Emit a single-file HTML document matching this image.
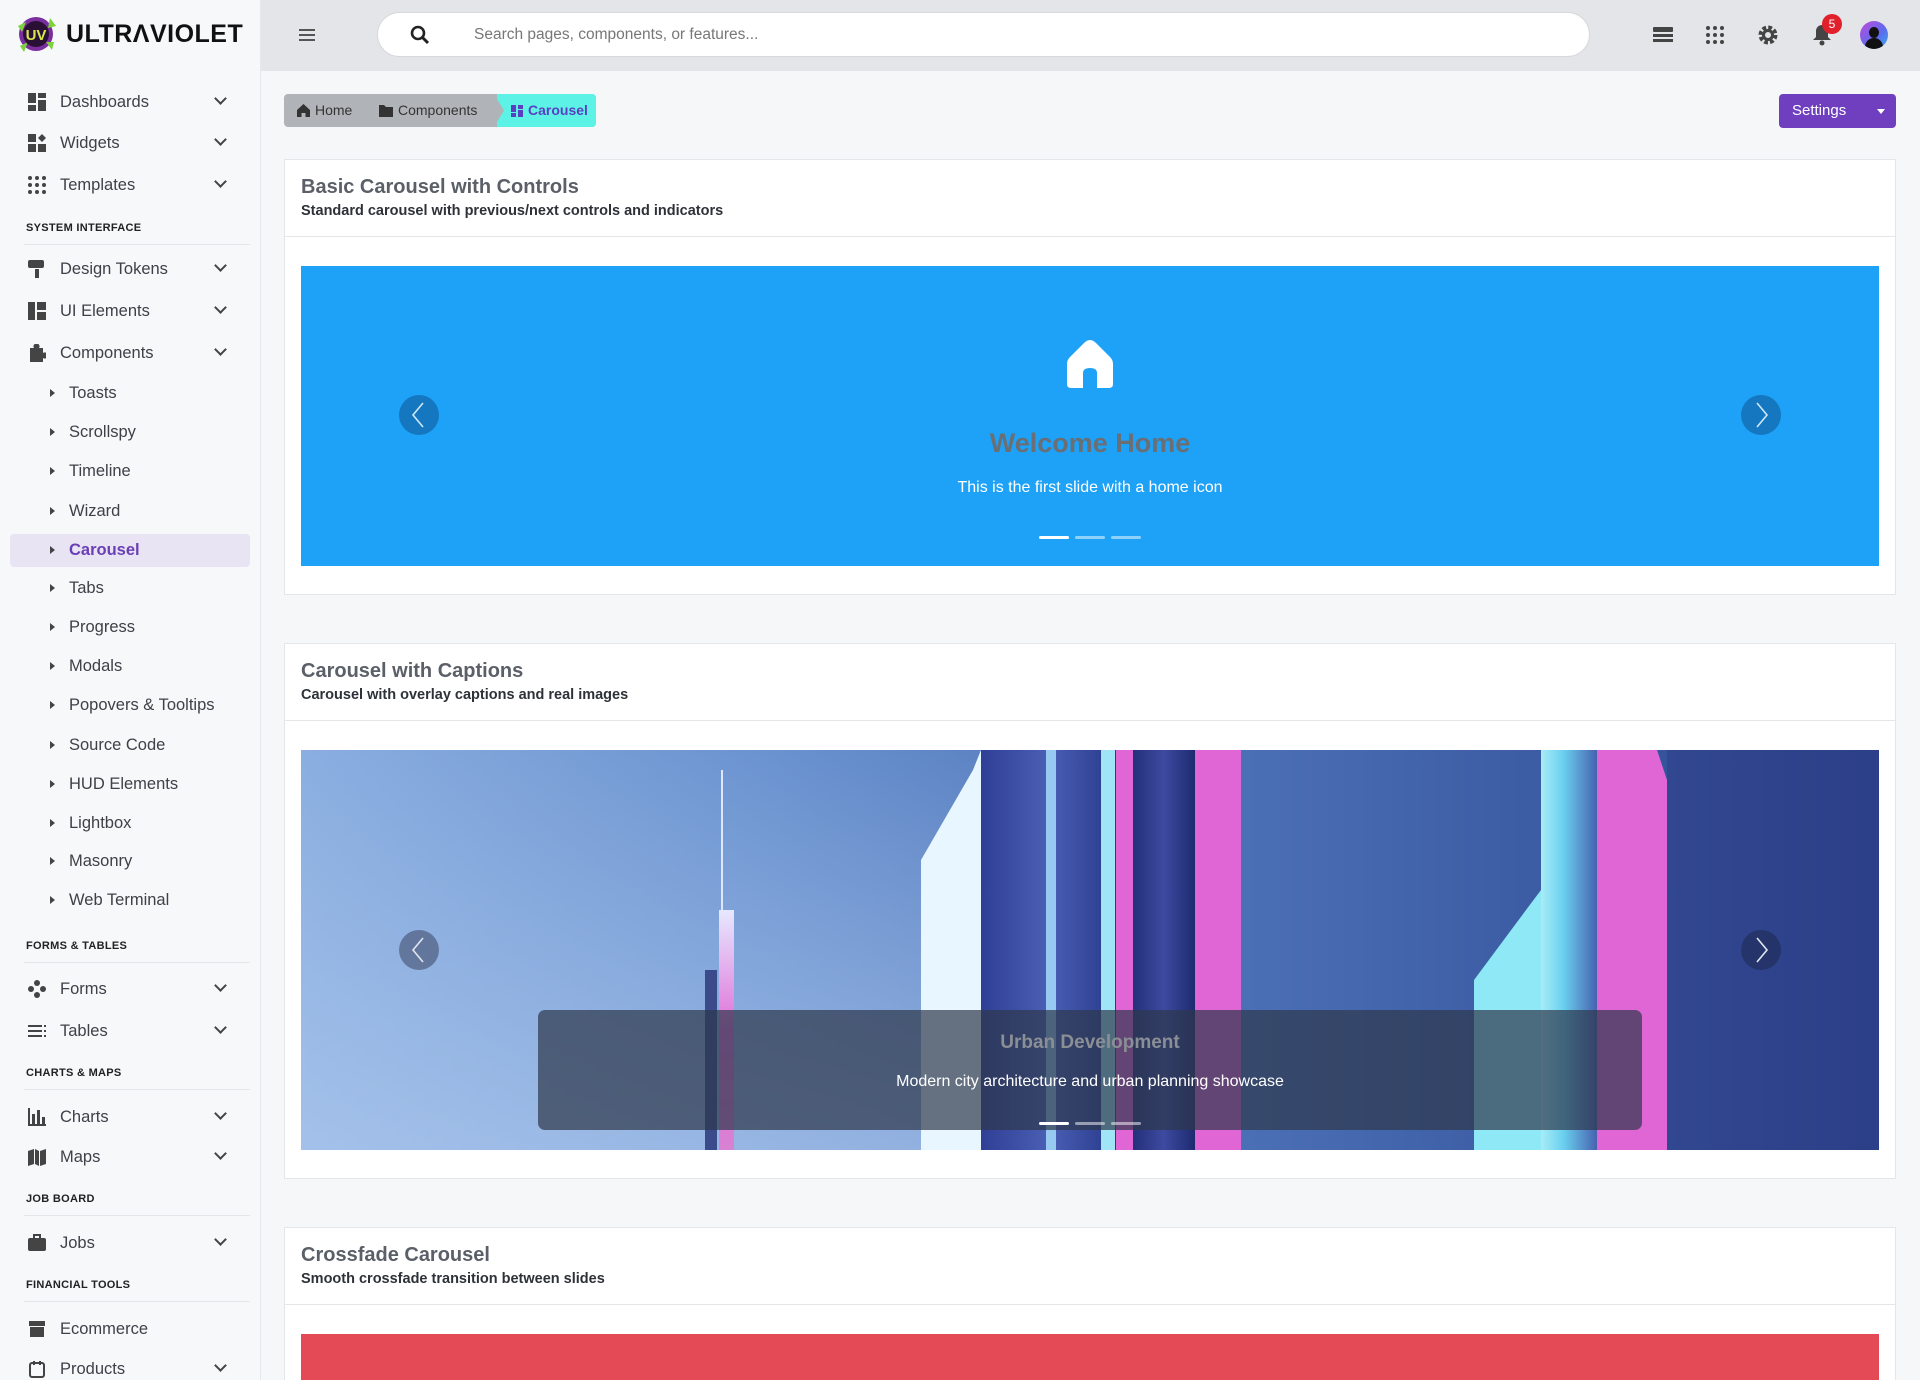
<!DOCTYPE html>
<html style="width:1920px;height:1380px;overflow:hidden"><head><meta charset="utf-8"><style>
*{box-sizing:border-box;margin:0;padding:0}
body{width:1920px;height:1380px;overflow:hidden;background:#f6f7f9;font-family:"Liberation Sans",sans-serif;color:#3d4148;position:relative}
.sb{position:absolute;left:0;top:0;width:261px;height:1380px;background:#f7f8fa;border-right:1px solid #e6e8eb}
.logo{position:absolute;left:14px;top:12px;display:flex;align-items:center}
.logo b{font-size:25px;font-weight:900;color:#111;letter-spacing:0.5px;margin-left:8px}
.it{position:absolute;left:0;width:261px;height:30px;display:flex;align-items:center;font-size:16.5px;color:#3d4148}
.it .ic{position:absolute;left:28px;width:18px;height:18px}
.it .lb{position:absolute;left:60px}
.it .ch{position:absolute;left:216px;width:9px;height:9px;border-right:2px solid #444;border-bottom:2px solid #444;transform:rotate(45deg);top:7px}
.sub .lb{left:69px}
.sub .ar{position:absolute;left:50px;width:0;height:0;border-left:5px solid #444;border-top:4px solid transparent;border-bottom:4px solid transparent}
.sec{position:absolute;left:26px;font-size:11px;font-weight:bold;color:#222;letter-spacing:0.3px}
.sec:after{content:"";position:absolute;left:-2px;top:22px;width:226px;height:1px;background:#e4e6ea}
.top{position:absolute;left:261px;top:0;width:1659px;height:71px;background:#e3e5e8}
.search{position:absolute;left:377px;top:12px;width:1213px;height:45px;background:#fff;border-radius:23px;border:1px solid #d6d8dc}
.search span{position:absolute;left:96px;top:13px;font-size:15.5px;color:#777}
.card{position:absolute;left:284px;width:1612px;background:#fff;border:1px solid #e4e6ea;overflow:hidden}
.card .hd{height:77px;border-bottom:1px solid #e4e6ea;padding:16px 16px}
.card h2{font-size:20px;color:#5b6068;font-weight:bold}
.card p.s{font-size:14.5px;font-weight:bold;color:#2e3238;margin-top:4px}
.arrow{position:absolute;width:40px;height:40px;border-radius:50%}
.ind{position:absolute;height:3px;width:30px;border-radius:2px}
</style></head><body>
<div class="sb">
 <div class="logo">
  <svg width="44" height="44" viewBox="0 0 44 44"><circle cx="22" cy="22" r="17" fill="#7b2f9e"/><path d="M4 14 L12 10 L8 20Z M36 6 L34 16 L42 14Z M40 30 L32 30 L38 38Z M6 34 L14 30 L10 40Z" fill="#7cd23a"/><circle cx="22" cy="22" r="13" fill="#2a1035"/><text x="22" y="28" font-size="15" font-weight="900" fill="#d7e84a" text-anchor="middle" font-family="Liberation Sans">UV</text></svg>
  <b>ULTRΛVIOLET</b>
 </div>
 <div class="it" style="top:87px"><svg class="ic" viewBox="0 0 18 18" fill="#444"><rect x="0" y="0" width="8" height="10"/><rect x="10" y="0" width="8" height="5"/><rect x="0" y="12" width="8" height="6"/><rect x="10" y="7" width="8" height="11"/></svg><span class="lb">Dashboards</span><span class="ch"></span></div>
 <div class="it" style="top:128px"><svg class="ic" viewBox="0 0 18 18" fill="#444"><rect x="0" y="0" width="8" height="8"/><path d="M14 0 L18 4 L14 8 L10 4Z"/><rect x="0" y="10" width="8" height="8"/><rect x="10" y="10" width="8" height="8"/></svg><span class="lb">Widgets</span><span class="ch"></span></div>
 <div class="it" style="top:170px"><svg class="ic" viewBox="0 0 18 18" fill="#444"><circle cx="2" cy="2" r="2"/><circle cx="9" cy="2" r="2"/><circle cx="16" cy="2" r="2"/><circle cx="2" cy="9" r="2"/><circle cx="9" cy="9" r="2"/><circle cx="16" cy="9" r="2"/><circle cx="2" cy="16" r="2"/><circle cx="9" cy="16" r="2"/><circle cx="16" cy="16" r="2"/></svg><span class="lb">Templates</span><span class="ch"></span></div>
 <div class="sec" style="top:222px">SYSTEM INTERFACE</div>
 <div class="it" style="top:254px"><svg class="ic" viewBox="0 0 18 18" fill="#444"><rect x="0" y="0" width="16" height="8" rx="2"/><rect x="7" y="9" width="4" height="9"/></svg><span class="lb">Design Tokens</span><span class="ch"></span></div>
 <div class="it" style="top:296px"><svg class="ic" viewBox="0 0 18 18" fill="#444"><rect x="0" y="0" width="7" height="18"/><rect x="9" y="0" width="9" height="8"/><rect x="9" y="10" width="9" height="8"/></svg><span class="lb">UI Elements</span><span class="ch"></span></div>
 <div class="it" style="top:338px"><svg class="ic" viewBox="0 0 18 18" fill="#444"><path d="M2 4h4a3 3 0 1 1 5 0h4v5a3 3 0 1 1 0 5v4H2z"/></svg><span class="lb">Components</span><span class="ch"></span></div>
 <div class="it sub" style="top:378px"><span class="ar"></span><span class="lb">Toasts</span></div>
 <div class="it sub" style="top:417px"><span class="ar"></span><span class="lb">Scrollspy</span></div>
 <div class="it sub" style="top:456px"><span class="ar"></span><span class="lb">Timeline</span></div>
 <div class="it sub" style="top:496px"><span class="ar"></span><span class="lb">Wizard</span></div>
 <div style="position:absolute;left:10px;top:534px;width:240px;height:33px;background:#e9e4f4;border-radius:4px"></div>
 <div class="it sub" style="top:535px;color:#6a3fb5;font-weight:bold"><span class="ar"></span><span class="lb">Carousel</span></div>
 <div class="it sub" style="top:573px"><span class="ar"></span><span class="lb">Tabs</span></div>
 <div class="it sub" style="top:612px"><span class="ar"></span><span class="lb">Progress</span></div>
 <div class="it sub" style="top:651px"><span class="ar"></span><span class="lb">Modals</span></div>
 <div class="it sub" style="top:690px"><span class="ar"></span><span class="lb">Popovers &amp; Tooltips</span></div>
 <div class="it sub" style="top:730px"><span class="ar"></span><span class="lb">Source Code</span></div>
 <div class="it sub" style="top:769px"><span class="ar"></span><span class="lb">HUD Elements</span></div>
 <div class="it sub" style="top:808px"><span class="ar"></span><span class="lb">Lightbox</span></div>
 <div class="it sub" style="top:846px"><span class="ar"></span><span class="lb">Masonry</span></div>
 <div class="it sub" style="top:885px"><span class="ar"></span><span class="lb">Web Terminal</span></div>
 <div class="sec" style="top:940px">FORMS &amp; TABLES</div>
 <div class="it" style="top:974px"><svg class="ic" viewBox="0 0 18 18" fill="#444"><circle cx="9" cy="3" r="3"/><circle cx="3" cy="9" r="3"/><circle cx="15" cy="9" r="3"/><circle cx="9" cy="15" r="3"/></svg><span class="lb">Forms</span><span class="ch"></span></div>
 <div class="it" style="top:1016px"><svg class="ic" viewBox="0 0 18 18" fill="#444"><rect x="0" y="3" width="14" height="2"/><rect x="0" y="8" width="14" height="2"/><rect x="0" y="13" width="14" height="2"/><rect x="16" y="3" width="2" height="2"/><rect x="16" y="8" width="2" height="2"/><rect x="16" y="13" width="2" height="2"/></svg><span class="lb">Tables</span><span class="ch"></span></div>
 <div class="sec" style="top:1067px">CHARTS &amp; MAPS</div>
 <div class="it" style="top:1102px"><svg class="ic" viewBox="0 0 18 18" fill="#444"><rect x="0" y="0" width="2" height="18"/><rect x="0" y="16" width="18" height="2"/><rect x="4" y="6" width="3" height="10"/><rect x="9" y="2" width="3" height="14"/><rect x="14" y="9" width="3" height="7"/></svg><span class="lb">Charts</span><span class="ch"></span></div>
 <div class="it" style="top:1142px"><svg class="ic" viewBox="0 0 18 18" fill="#444"><path d="M0 3 L6 1 V16 L0 18Z M7 1 L11 3 V18 L7 16Z M12 3 L18 1 V16 L12 18Z"/></svg><span class="lb">Maps</span><span class="ch"></span></div>
 <div class="sec" style="top:1193px">JOB BOARD</div>
 <div class="it" style="top:1228px"><svg class="ic" viewBox="0 0 18 18" fill="#444"><rect x="0" y="4" width="18" height="13" rx="2"/><rect x="6" y="1" width="6" height="4" fill="none" stroke="#444" stroke-width="2"/></svg><span class="lb">Jobs</span><span class="ch"></span></div>
 <div class="sec" style="top:1279px">FINANCIAL TOOLS</div>
 <div class="it" style="top:1314px"><svg class="ic" viewBox="0 0 18 18" fill="#444"><rect x="1" y="1" width="16" height="5"/><rect x="2" y="7" width="14" height="10"/></svg><span class="lb">Ecommerce</span></div>
 <div class="it" style="top:1354px"><svg class="ic" viewBox="0 0 18 18" fill="none" stroke="#444" stroke-width="2"><rect x="2" y="3" width="14" height="14" rx="2"/><path d="M6 1v4M12 1v4"/></svg><span class="lb">Products</span><span class="ch"></span></div>
</div>

<div class="top">
 <svg style="position:absolute;left:38px;top:28px" width="16" height="14" viewBox="0 0 16 14" fill="#555"><rect y="1" width="16" height="2"/><rect y="6" width="16" height="2"/><rect y="11" width="16" height="2"/></svg>
 <div class="search" style="left:116px"><svg style="position:absolute;left:32px;top:12px" width="20" height="20" viewBox="0 0 20 20"><circle cx="8" cy="8" r="6" fill="none" stroke="#222" stroke-width="2.6"/><path d="M12.5 12.5L18 18" stroke="#222" stroke-width="3"/></svg><span>Search pages, components, or features...</span></div>
 <svg style="position:absolute;left:1392px;top:27px" width="20" height="16" viewBox="0 0 20 16" fill="#444"><rect y="0" width="20" height="5" rx="1"/><rect y="7" width="20" height="3"/><rect y="12" width="20" height="3"/></svg>
 <svg style="position:absolute;left:1445px;top:26px" width="18" height="18" viewBox="0 0 18 18" fill="#444"><circle cx="2" cy="2" r="2"/><circle cx="9" cy="2" r="2"/><circle cx="16" cy="2" r="2"/><circle cx="2" cy="9" r="2"/><circle cx="9" cy="9" r="2"/><circle cx="16" cy="9" r="2"/><circle cx="2" cy="16" r="2"/><circle cx="9" cy="16" r="2"/><circle cx="16" cy="16" r="2"/></svg>
 <svg style="position:absolute;left:1496px;top:24px" width="22" height="22" viewBox="0 0 22 22"><circle cx="11" cy="11" r="7" fill="none" stroke="#444" stroke-width="5" stroke-dasharray="3.5 2"/><circle cx="11" cy="11" r="6" fill="#444"/><circle cx="11" cy="11" r="3" fill="#e3e5e8"/></svg>
 <svg style="position:absolute;left:1551px;top:24px" width="20" height="22" viewBox="0 0 20 22" fill="#444"><path d="M10 1a6 6 0 0 1 6 6v6l3 3H1l3-3V7a6 6 0 0 1 6-6z"/><circle cx="10" cy="19" r="2.5"/></svg>
 <div style="position:absolute;left:1561px;top:14px;width:20px;height:20px;border-radius:50%;background:#e0202a;color:#fff;font-size:12px;text-align:center;line-height:20px">5</div>
 <div style="position:absolute;left:1599px;top:21px;width:28px;height:28px;border-radius:50%;background:linear-gradient(135deg,#c04ad8,#5a6cf0 60%,#3ab0e8);overflow:hidden"><div style="position:absolute;left:9px;top:6px;width:10px;height:11px;border-radius:50%;background:#111"></div><div style="position:absolute;left:5px;top:17px;width:18px;height:14px;border-radius:9px 9px 0 0;background:#111"></div></div>
</div>

<div style="position:absolute;left:284px;top:94px;width:312px;height:33px;border-radius:4px;overflow:hidden;background:#b0b4b9;font-size:14px">
 <div style="position:absolute;left:213px;top:0;width:99px;height:33px;background:#5cf2e6"></div>
 <svg style="position:absolute;left:210px;top:0" width="10" height="33"><path d="M0 0 L10 16.5 L0 33Z" fill="#b0b4b9"/></svg>
 <svg style="position:absolute;left:13px;top:10px" width="13" height="13" viewBox="0 0 13 13" fill="#333"><path d="M6.5 0 L13 6 V13 H8.5 V9 H4.5 V13 H0 V6Z"/></svg>
 <span style="position:absolute;left:31px;top:8px;color:#333">Home</span>
 <svg style="position:absolute;left:95px;top:11px" width="14" height="12" viewBox="0 0 14 12" fill="#333"><path d="M0 0h5l2 2h7v10H0z"/></svg>
 <span style="position:absolute;left:114px;top:8px;color:#333">Components</span>
 <svg style="position:absolute;left:227px;top:11px" width="12" height="12" viewBox="0 0 12 12" fill="#5b3fc2"><rect width="5" height="7"/><rect x="7" width="5" height="4"/><rect y="8" width="5" height="4"/><rect x="7" y="5" width="5" height="7"/></svg>
 <span style="position:absolute;left:244px;top:8px;color:#5b3fc2;font-weight:bold">Carousel</span>
</div>
<div style="position:absolute;left:1779px;top:94px;width:117px;height:34px;border-radius:4px;background:#6f3fc0;color:#fff;font-size:15px">
 <span style="position:absolute;left:13px;top:8px">Settings</span>
 <span style="position:absolute;left:98px;top:15px;border-top:5px solid #fff;border-left:4px solid transparent;border-right:4px solid transparent"></span>
</div>

<div class="card" style="top:159px;height:436px">
 <div class="hd"><h2>Basic Carousel with Controls</h2><p class="s">Standard carousel with previous/next controls and indicators</p></div>
 <div style="position:absolute;left:16px;top:106px;width:1578px;height:300px;background:#1da2f7">
  <svg style="position:absolute;left:766px;top:74px" width="46" height="48" viewBox="0 0 46 48" fill="#fff"><path d="M23 0 Q26 0 29 3 L43 17 Q46 20 46 24 V44 Q46 48 42 48 H30 V33 Q30 28 23 28 Q16 28 16 33 V48 H4 Q0 48 0 44 V24 Q0 20 3 17 L17 3 Q20 0 23 0Z"/></svg>
  <div style="position:absolute;left:0;width:100%;top:162px;text-align:center;font-size:27px;font-weight:bold;color:#6b6e73">Welcome Home</div>
  <div style="position:absolute;left:0;width:100%;top:213px;text-align:center;font-size:16px;color:#fff">This is the first slide with a home icon</div>
  <div class="ind" style="left:738px;top:270px;background:#fff"></div>
  <div class="ind" style="left:774px;top:270px;background:rgba(255,255,255,.5)"></div>
  <div class="ind" style="left:810px;top:270px;background:rgba(255,255,255,.5)"></div>
  <div class="arrow" style="left:98px;top:129px;background:#1477bf"><svg width="40" height="40"><path d="M24 8 L14 20 L24 32" fill="none" stroke="#cfe8fb" stroke-width="1.6"/></svg></div>
  <div class="arrow" style="left:1440px;top:129px;background:#1477bf"><svg width="40" height="40"><path d="M16 8 L26 20 L16 32" fill="none" stroke="#cfe8fb" stroke-width="1.6"/></svg></div>
 </div>
</div>

<div class="card" style="top:643px;height:536px">
 <div class="hd"><h2>Carousel with Captions</h2><p class="s">Carousel with overlay captions and real images</p></div>
 <div style="position:absolute;left:16px;top:106px;width:1578px;height:400px;overflow:hidden;background:linear-gradient(90deg,#8aaee0 0%,#6a92cf 30%,#4b6fb5 60%,#3a5aa2 80%,#2d4790 100%)">
  <div style="position:absolute;left:0;top:0;width:700px;height:400px;background:linear-gradient(0deg,rgba(180,205,240,.6),rgba(0,0,0,0))"></div>
  <div style="position:absolute;left:420px;top:20px;width:2px;height:200px;background:#dfe6ff"></div>
  <div style="position:absolute;left:418px;top:160px;width:15px;height:240px;background:linear-gradient(#e6e9ff,#e070d8 50%,#d882d4)"></div>
  <div style="position:absolute;left:404px;top:220px;width:12px;height:180px;background:#3b4a8a"></div>
  <svg style="position:absolute;left:610px;top:0" width="80" height="400"><path d="M10 110 L62 20 L70 0 L70 400 L10 400Z" fill="#e8f7ff"/></svg>
  <div style="position:absolute;left:680px;top:0;width:135px;height:400px;background:linear-gradient(90deg,#2f3f95,#4a5fb5,#283a8a)"></div>
  <div style="position:absolute;left:745px;top:0;width:10px;height:400px;background:#98c9f0"></div>
  <div style="position:absolute;left:800px;top:0;width:14px;height:400px;background:#9fe5f5"></div>
  <div style="position:absolute;left:815px;top:0;width:125px;height:400px;background:#e066d6"></div>
  <div style="position:absolute;left:832px;top:0;width:62px;height:400px;background:linear-gradient(90deg,#24307a,#3d4aa0,#1e2a70)"></div>
  <svg style="position:absolute;left:1165px;top:0" width="80" height="400"><path d="M8 230 L60 160 L75 140 L75 400 L8 400Z" fill="#8ee8f5"/></svg>
  <div style="position:absolute;left:1240px;top:0;width:56px;height:400px;background:linear-gradient(90deg,#a8ecf8,#6ad0ee 40%,#4662b0)"></div>
  <svg style="position:absolute;left:1296px;top:0" width="72" height="400"><path d="M0 0 H60 L70 30 V400 H0Z" fill="#e066d6"/></svg>
  <div style="position:absolute;left:1366px;top:0;width:212px;height:400px;background:linear-gradient(90deg,#31478f,#2c3f88)"></div>
  <div style="position:absolute;left:237px;top:260px;width:1104px;height:120px;border-radius:7px;background:rgba(45,55,75,.7)"></div>
  <div style="position:absolute;left:0;width:100%;top:282px;text-align:center;font-size:19px;font-weight:bold;color:#8a8e95">Urban Development</div>
  <div style="position:absolute;left:0;width:100%;top:323px;text-align:center;font-size:16px;color:#fff">Modern city architecture and urban planning showcase</div>
  <div class="ind" style="left:738px;top:372px;background:#fff"></div>
  <div class="ind" style="left:774px;top:372px;background:rgba(255,255,255,.5)"></div>
  <div class="ind" style="left:810px;top:372px;background:rgba(255,255,255,.5)"></div>
  <div class="arrow" style="left:98px;top:180px;background:rgba(60,70,100,.55)"><svg width="40" height="40"><path d="M24 8 L14 20 L24 32" fill="none" stroke="#e0e6f0" stroke-width="1.6"/></svg></div>
  <div class="arrow" style="left:1440px;top:180px;background:rgba(30,40,80,.55)"><svg width="40" height="40"><path d="M16 8 L26 20 L16 32" fill="none" stroke="#e0e6f0" stroke-width="1.6"/></svg></div>
 </div>
</div>

<div class="card" style="top:1227px;height:153px;border-bottom:none">
 <div class="hd"><h2>Crossfade Carousel</h2><p class="s">Smooth crossfade transition between slides</p></div>
 <div style="position:absolute;left:16px;top:106px;width:1578px;height:50px;background:#e44a56"></div>
</div>
</body></html>
